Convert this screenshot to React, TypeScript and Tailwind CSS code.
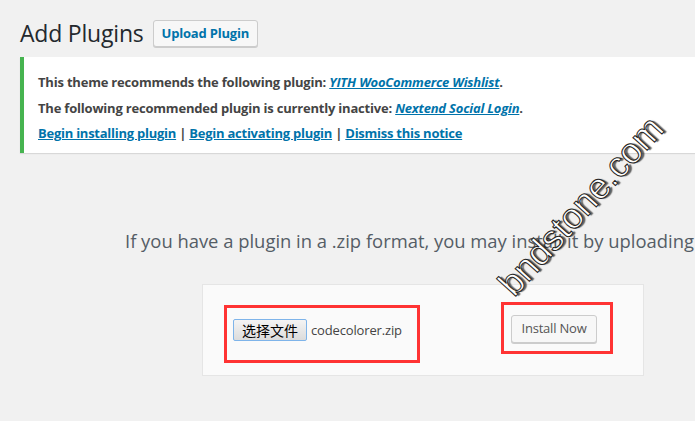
export default function App() {
  const font = { fontFamily: '"Open Sans", "Noto Sans", sans-serif' };
  return (
    <div className="relative w-[695px] h-[421px] overflow-hidden bg-[#f1f1f1] text-[#444]" style={font}>
      <div className="pl-[20px] pt-[19px] flex items-center gap-[9px]">
        <h1 className="text-[23px] leading-[29px] text-[#23282d] font-normal tracking-[-0.2px]">Add Plugins</h1>
        <button className="h-[27px] px-[8px] border border-[#ccc] bg-[#f7f7f7] rounded-[3px] text-[13px] font-bold text-[#0073aa] shadow-[0_1px_0_#ccc] tracking-[-0.2px]">
          Upload Plugin
        </button>
      </div>

      <div className="ml-[20px] mt-[9px] h-[96px] bg-white border-l-4 border-[#46b450] shadow-[0_1px_1px_rgba(0,0,0,0.1)] pl-[14px] pt-[16px] text-[13px] font-bold text-[#444] whitespace-nowrap">
        <p className="leading-[19px] mb-[7px] tracking-[-0.2px]">
          This theme recommends the following plugin:{' '}
          <a className="italic text-[#0073aa] underline">YITH WooCommerce Wishlist</a>.
        </p>
        <p className="leading-[19px] mb-[6px] tracking-[-0.2px]">
          The following recommended plugin is currently inactive:{' '}
          <a className="italic text-[#0073aa] underline">Nextend Social Login</a>.
        </p>
        <p className="leading-[19px] tracking-[-0.25px]">
          <a className="text-[#0073aa] underline">Begin installing plugin</a> |{' '}
          <a className="text-[#0073aa] underline">Begin activating plugin</a> |{' '}
          <a className="text-[#0073aa] underline">Dismiss this notice</a>
        </p>
      </div>

      <p className="mt-[76px] pl-[125px] text-[18.4px] leading-[24px] text-[#555d66] whitespace-nowrap">
        If you have a plugin in a .zip format, you may install it by uploading it here.
      </p>

      <div className="ml-[202px] mt-[31px] w-[442px] h-[92px] bg-[#fafafa] border border-[#e5e5e5] flex items-start">
        <div className="ml-[21px] mt-[20px] w-[196px] h-[58px] border-[3px] border-[#ff3333] flex items-center pl-[6px] gap-[4px]">
          <button
            className="h-[22px] w-[74px] mt-[-8px] border border-[#7eb4ea] rounded-[2px] bg-gradient-to-b from-[#f4f4f4] to-[#dcdcdc] text-[14px] text-black leading-none"
            style={{ fontFamily: '"Noto Sans CJK SC", sans-serif' }}
          >
            选择文件
          </button>
          <span className="mt-[-7px] text-[13px] text-[#444] tracking-[-0.15px]">codecolorer.zip</span>
        </div>
        <div className="ml-[81px] mt-[17px] w-[112px] h-[52px] border-[3px] border-[#ff3333] flex items-start pl-[7px] pt-[10px]">
          <button className="h-[28px] w-[86px] border border-[#ccc] bg-[#f7f7f7] rounded-[3px] text-[13px] text-[#555] shadow-[0_1px_0_#ccc] tracking-[-0.2px]">
            Install Now
          </button>
        </div>
      </div>

      <div
        className="absolute left-[581px] top-[206px] -translate-x-1/2 -translate-y-1/2 rotate-[-48deg] text-[36px] text-white whitespace-nowrap [-webkit-text-stroke:1px_#222] [text-shadow:2px_2px_1px_rgba(0,0,0,0.6)]"
        style={{ fontFamily: '"Liberation Sans", Arial, sans-serif' }}
      >
        bndstone.com
      </div>
    </div>
  );
}
